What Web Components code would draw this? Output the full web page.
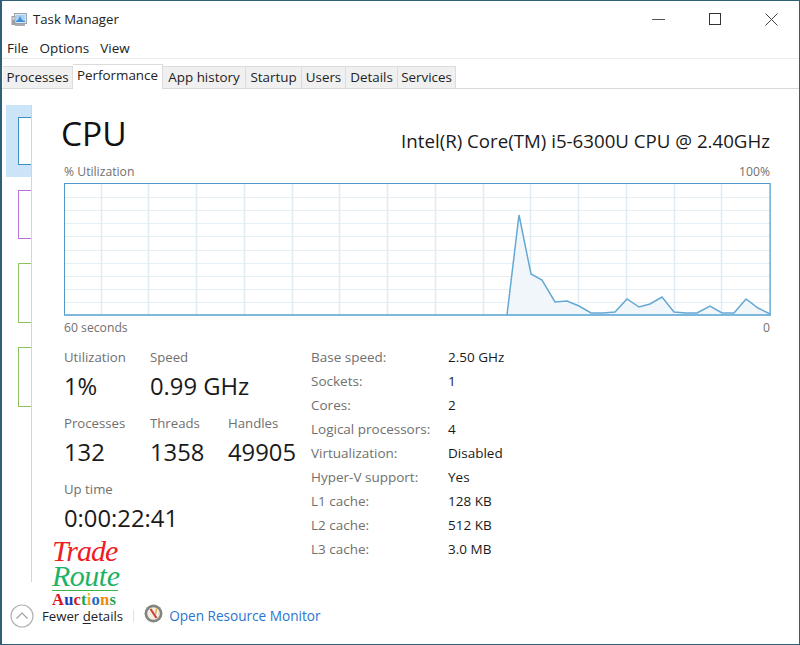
<!DOCTYPE html>
<html>
<head>
<meta charset="utf-8">
<title>Task Manager</title>
<style>
    html, body { margin: 0; padding: 0; height: 100%; background: #fff; }
    body { font-family: "Open Sans", "Noto Sans", sans-serif; color: #1a1a1a; }
</style>
</head>
<body>
<task-window>
    <title-bar></title-bar>
    <menu-bar></menu-bar>
    <tab-strip></tab-strip>
    <perf-panel>
        <perf-sidebar slot="side"></perf-sidebar>
        <cpu-view></cpu-view>
    </perf-panel>
    <footer-bar></footer-bar>
</task-window>

<script>
const FONT = '"Open Sans", "Noto Sans", sans-serif';

class TaskWindow extends HTMLElement {
    constructor() {
        super();
        this.attachShadow({ mode: 'open' });
        this.shadowRoot.innerHTML = `
            <style>
                :host {
                    display: flex;
                    flex-direction: column;
                    box-sizing: border-box;
                    width: 800px;
                    height: 645px;
                    border: 1px solid #2f6078;
                    border-width: 1px 1px 1px 2px;
                    background: #fff;
                    overflow: hidden;
                    position: relative;
                }
            </style>
            <slot></slot>
        `;
    }
}

class TitleBar extends HTMLElement {
    constructor() {
        super();
        this.attachShadow({ mode: 'open' });
        this.shadowRoot.innerHTML = `
            <style>
                :host {
                    display: flex;
                    align-items: center;
                    height: 36px;
                    padding-left: 9px;
                    font: 13.2px ${FONT};
                    color: #222;
                }
                .name { margin-left: 6px; flex: 1; }
                .btn { height: 36px; display: flex; align-items: center; justify-content: center; }
            </style>
            <svg width="16" height="17" viewBox="0 0 16 17">
                <rect x="3.5" y="2.5" width="12" height="10" fill="#dfe6ec" stroke="#98a4ae"/>
                <rect x="5" y="4" width="9" height="7" fill="#a9d2f2"/>
                <path d="M5 10l2-1 2-4 2 4 3 1v1H5z" fill="#3f8fd6"/>
                <rect x="0.5" y="5" width="4" height="9" fill="#9a9fa4"/>
                <rect x="1.5" y="6" width="2" height="3" fill="#d5d8db"/>
                <rect x="4" y="13" width="10" height="2" fill="#a9adb2"/>
            </svg>
            <span class="name">Task Manager</span>
            <div class="btn" style="width:55px"><svg width="13" height="12" viewBox="0 0 13 12"><path d="M0 6.5h13" stroke="#555"/></svg></div>
            <div class="btn" style="width:57px"><svg width="12" height="12" viewBox="0 0 12 12"><rect x=".5" y=".5" width="11" height="11" fill="none" stroke="#333"/></svg></div>
            <div class="btn" style="width:56px"><svg width="13" height="13" viewBox="0 0 13 13"><path d="M.5.5l12 12M12.5.5l-12 12" stroke="#444" fill="none"/></svg></div>
        `;
    }
}

class MenuBar extends HTMLElement {
    constructor() {
        super();
        this.attachShadow({ mode: 'open' });
        this.shadowRoot.innerHTML = `
            <style>
                :host {
                    display: flex;
                    align-items: center;
                    gap: 11px;
                    height: 21px;
                    padding-left: 5px;
                    font: 13.5px ${FONT};
                    color: #222;
                }
            </style>
            <span>File</span><span>Options</span><span>View</span>
        `;
    }
}

class TabStrip extends HTMLElement {
    constructor() {
        super();
        this.attachShadow({ mode: 'open' });
        const tabs = [['Processes', 70], ['Performance', 90], ['App history', 83], ['Startup', 56], ['Users', 44], ['Details', 52], ['Services', 58]];
        this.shadowRoot.innerHTML = `
            <style>
                :host {
                    display: flex;
                    align-items: flex-end;
                    box-sizing: border-box;
                    height: 31px;
                    padding-left: 1px;
                    border-top: 1px solid #ececec;
                    border-bottom: 1px solid #d9d9d9;
                    font: 13.4px ${FONT};
                    color: #222;
                }
                .tab {
                    box-sizing: border-box;
                    height: 22px;
                    line-height: 21px;
                    text-align: center;
                    background: #f0f0f0;
                    border: 1px solid #dcdcdc;
                    border-bottom: 0;
                    border-left: 0;
                    white-space: nowrap;
                }
                .tab.on {
                    height: 25px;
                    background: #fff;
                    margin-bottom: -1px;
                }
                .tab:first-child { border-left: 1px solid #dcdcdc; }
            </style>
            ${tabs.map(t => `<div class="tab${t[0] === 'Performance' ? ' on' : ''}" style="width:${t[1]}px">${t[0]}</div>`).join('')}
        `;
    }
}

class PerfPanel extends HTMLElement {
    constructor() {
        super();
        this.attachShadow({ mode: 'open' });
        this.shadowRoot.innerHTML = `
            <style>
                :host { display: flex; flex: 1; min-height: 0; }
            </style>
            <slot name="side"></slot>
            <slot></slot>
        `;
    }
}

class PerfSidebar extends HTMLElement {
    constructor() {
        super();
        this.attachShadow({ mode: 'open' });
        this.shadowRoot.innerHTML = `
            <style>
                :host {
                    display: block;
                    box-sizing: border-box;
                    width: 30px;
                    height: 477px;
                    margin-top: 16px;
                    padding-left: 4px;
                    border-right: 1px solid #d4d4d4;
                }
                .item { display: flex; align-items: center; height: 72px; padding-left: 12px; overflow: hidden; }
                .item.on { background: #cce4f7; }
                .thumb { width: 40px; flex: none; box-sizing: border-box; border: 1px solid; background: #fff; }
                .cpu { height: 48px; border-color: #3c90c4; border-width: 1px 0 1px 1px; }
                .mem { height: 49px; border-color: #bb72d8; margin-top: 13px; }
                .d1 { height: 60px; border-color: #8cc063; margin-top: 24px; }
                .d2 { height: 60px; border-color: #8cc063; margin-top: 24px; }
                .gap { padding-left: 12px; overflow: hidden; }
            </style>
            <div class="item on"><div class="thumb cpu"></div></div>
            <div class="gap"><div class="thumb mem"></div></div>
            <div class="gap"><div class="thumb d1"></div></div>
            <div class="gap"><div class="thumb d2"></div></div>
        `;
    }
}

class UsageGraph extends HTMLElement {
    constructor() {
        super();
        this.attachShadow({ mode: 'open' });
        const pts = [[507,315],[519,215],[531,274],[542,280],[555,302],[567,301],[579,306],[591,313],[603,313],[615,312],
            [627,299],[639,307],[650,304],[662,297],[674,312],[686,313],[697,313],[710,306],[722,313],[734,313],
            [746,299],[758,308],[770,314]];
        // coords above are page pixels, the svg starts at 64,183
        const rel = pts.map(p => `${p[0] - 64},${p[1] - 183}`).join(' ');
        let grid = '';
        for (let i = 1; i <= 9; i++) {
            const y = Math.round(i * 13.1) + 1.5;
            grid += `<path d="M1 ${y}H706" stroke="#e4f0f6"/>`;
        }
        for (let i = 0; i < 14; i++) {
            const x = Math.round(36.7 + i * 47.75) + .5;
            grid += `<path d="M${x} 1V131" stroke="#e0edf4" stroke-width="1.6"/>`;
        }
        this.shadowRoot.innerHTML = `
            <style>
                :host { display: block; width: 707px; height: 133px; }
                svg { display: block; }
            </style>
            <svg width="707" height="133" viewBox="0 0 707 133">
                ${grid}
                <polygon points="${rel}" fill="#f1f6fb"/>
                <polyline points="${rel}" fill="none" stroke="#64a8d4" stroke-width="1.5"/>
                <rect x=".5" y=".5" width="705.5" height="131.5" fill="none" stroke="#4f9ac8"/>
                <path d="M0 132h707" stroke="#6fb0d8" stroke-width="1.6"/>
                <path d="M706.5 0v133" stroke="#7db9de" stroke-width="1.4"/>
            </svg>
        `;
    }
}

class StatCell extends HTMLElement {
    constructor() {
        super();
        this.attachShadow({ mode: 'open' });
        this.shadowRoot.innerHTML = `
            <style>
                :host { display: block; }
                .k { font-size: 13.2px; line-height: 18px; color: #707070; white-space: nowrap; }
                .v { font-size: 23.8px; line-height: 32px; color: #1a1a1a; margin-top: 4px; white-space: nowrap; }
            </style>
            <div class="k">${this.getAttribute('label')}</div>
            <div class="v">${this.getAttribute('value')}</div>
        `;
    }
}

class CpuView extends HTMLElement {
    constructor() {
        super();
        this.attachShadow({ mode: 'open' });
        const specs = [['Base speed:', '2.50 GHz'], ['Sockets:', '1'], ['Cores:', '2'], ['Logical processors:', '4'],
            ['Virtualization:', 'Disabled'], ['Hyper-V support:', 'Yes'], ['L1 cache:', '128 KB'], ['L2 cache:', '512 KB'], ['L3 cache:', '3.0 MB']];
        this.shadowRoot.innerHTML = `
            <style>
                :host { display: block; flex: 1; padding: 20px 29px 0 32px; min-width: 0; }
                .head { display: flex; justify-content: space-between; align-items: flex-end; height: 50px; }
                h1 { margin: 0 0 1px -3px; font-size: 33.5px; line-height: 49px; font-weight: 400; color: #111; }
                .model { font-size: 18.7px; line-height: 24px; margin-bottom: 6px; color: #1a1a1a; white-space: nowrap; }
                .scale { display: flex; justify-content: space-between; font-size: 12.2px; line-height: 16px; color: #707070; height: 16px; }
                .scale.top { margin-top: 5px; margin-bottom: 3px; }
                .scale.bottom { margin-top: 4px; }
                .lower { display: flex; margin-top: 12px; }
                .left { width: 247px; display: flex; flex-direction: column; gap: 12px; }
                .row { display: flex; }
                .specs { display: grid; grid-template-columns: 137px auto; grid-auto-rows: 24px; font-size: 13.5px; line-height: 24px; margin-top: -3px; }
                .specs .k { color: #707070; white-space: nowrap; }
                .specs .v { color: #1a1a1a; }
            </style>
            <div class="head"><h1>CPU</h1><div class="model">Intel(R) Core(TM) i5-6300U CPU @ 2.40GHz</div></div>
            <div class="scale top"><span>% Utilization</span><span>100%</span></div>
            <usage-graph></usage-graph>
            <div class="scale bottom"><span>60 seconds</span><span>0</span></div>
            <div class="lower">
                <div class="left">
                    <div class="row">
                        <stat-cell label="Utilization" value="1%" style="width:86px"></stat-cell>
                        <stat-cell label="Speed" value="0.99 GHz"></stat-cell>
                    </div>
                    <div class="row">
                        <stat-cell label="Processes" value="132" style="width:86px"></stat-cell>
                        <stat-cell label="Threads" value="1358" style="width:78px"></stat-cell>
                        <stat-cell label="Handles" value="49905"></stat-cell>
                    </div>
                    <div class="row">
                        <stat-cell label="Up time" value="0:00:22:41"></stat-cell>
                    </div>
                </div>
                <div class="specs">
                    ${specs.map(s => `<span class="k">${s[0]}</span><span class="v">${s[1]}</span>`).join('')}
                </div>
            </div>
        `;
    }
}

class TradeLogo extends HTMLElement {
    constructor() {
        super();
        this.attachShadow({ mode: 'open' });
        const colors = ['#d8141c', '#1a3cc0', '#d8141c', '#1ca64a', '#f0b010', '#1a6cc8', '#f08a10', '#1ca64a'];
        this.shadowRoot.innerHTML = `
            <style>
                :host {
                    position: absolute;
                    left: 50px;
                    top: 537px;
                    width: 66px;
                    font-family: "Liberation Serif", serif;
                }
                .t { font-size: 30px; line-height: 25px; font-style: italic; letter-spacing: -.9px; color: #ee1c25; }
                .r { font-size: 30px; line-height: 25px; font-style: italic; letter-spacing: -.5px; color: #1fb266; }
                .line { height: 1px; background: #3cb44a; margin-top: 2px; }
                .a { font-size: 16.5px; line-height: 14px; font-weight: 700; letter-spacing: .2px; margin-top: 2px; white-space: nowrap; }
            </style>
            <div class="t">Trade</div>
            <div class="r">Route</div>
            <div class="line"></div>
            <div class="a">${[...'Auctions'].map((c, i) => `<span style="color:${colors[i]}">${c}</span>`).join('')}</div>
        `;
    }
}

class FooterBar extends HTMLElement {
    constructor() {
        super();
        this.attachShadow({ mode: 'open' });
        this.shadowRoot.innerHTML = `
            <style>
                :host {
                    display: flex;
                    align-items: center;
                    height: 62px;
                    padding: 6px 0 0 8px;
                    box-sizing: border-box;
                    font: 13.2px ${FONT};
                    color: #222;
                    margin-top: auto;
                }
                .less { margin-right: 8px; display: block; }
                u { text-underline-offset: 2px; }
                .sep { width: 1px; height: 12px; background: #e2e2e2; margin: 0 10px; }
                .mon { margin-top: -6px; }
                a { color: #2a75d0; margin: -2px 0 0 6px; font-size: 13.6px; text-decoration: none; }
            </style>
            <svg class="less" width="24" height="24" viewBox="0 0 24 24">
                <circle cx="12" cy="12" r="11" fill="#fff" stroke="#b4b4b4" stroke-width="1.2"/>
                <path d="M6.5 14.5L12 9l5.5 5.5" fill="none" stroke="#a0a0a0" stroke-width="1.2"/>
            </svg>
            <span>Fewer <u>d</u>etails</span>
            <div class="sep"></div>
            <svg class="mon" width="19" height="19" viewBox="0 0 19 19">
                <circle cx="9.5" cy="9.5" r="9" fill="#85837f"/>
                <circle cx="9.5" cy="9.5" r="6.3" fill="#f3eee2"/>
                <path d="M6.5 5l6 9" stroke="#c9433a" stroke-width="2.2"/>
                <path d="M12.5 4.5l-1 6" stroke="#e0a93a" stroke-width="1.4"/>
            </svg>
            <a>Open Resource Monitor</a>
        `;
    }
}

customElements.define('task-window', TaskWindow);
customElements.define('title-bar', TitleBar);
customElements.define('menu-bar', MenuBar);
customElements.define('tab-strip', TabStrip);
customElements.define('perf-panel', PerfPanel);
customElements.define('perf-sidebar', PerfSidebar);
customElements.define('usage-graph', UsageGraph);
customElements.define('stat-cell', StatCell);
customElements.define('cpu-view', CpuView);
customElements.define('trade-logo', TradeLogo);
customElements.define('footer-bar', FooterBar);

document.querySelector('task-window').appendChild(document.createElement('trade-logo'));
</script>
</body>
</html>
